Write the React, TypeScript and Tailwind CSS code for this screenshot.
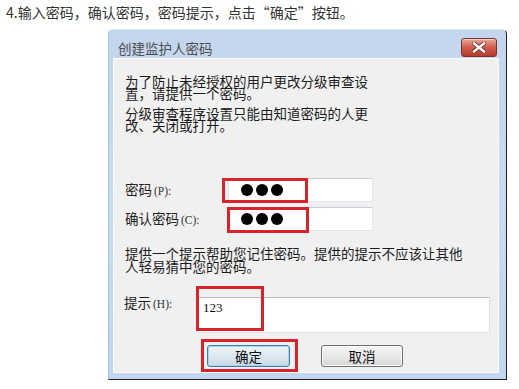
import React from "react";

const cjk = "font-['Noto_Sans_CJK_SC',sans-serif]";

function Dots() {
  return (
    <div className="flex gap-[3px] pl-[12px] items-center h-full">
      <span className="w-[12px] h-[12px] rounded-full bg-black" />
      <span className="w-[12px] h-[12px] rounded-full bg-black" />
      <span className="w-[12px] h-[12px] rounded-full bg-black" />
    </div>
  );
}

function Label({ zh, key2 }: { zh: string; key2: string }) {
  return (
    <div className="w-[103px] text-[13.5px] leading-[14px] text-[#222] whitespace-nowrap">
      {zh}
      <span className="font-['Liberation_Serif',serif] text-[11.5px] text-[#333] ml-[2px]">({key2}):</span>
    </div>
  );
}

export default function App() {
  return (
    <div className={`w-[519px] h-[389px] bg-white relative overflow-hidden ${cjk}`}>
      <p className="pl-[6px] h-[24px] leading-[24px] text-[14px] text-[#333]">
        4.输入密码，确认密码，密码提示，点击“确定”按钮。
      </p>

      {/* dialog */}
      <div className="ml-[108px] mt-[5px] w-[399px] h-[351px] flex flex-col bg-gradient-to-b from-[#c3d6ee] via-[#c9dbf1] to-[#c2d6ef] border-l border-t border-l-[#a9c0dc] border-t-[#dfe7f1] border-r border-b border-r-[#1e1e1e] border-b-[#1e1e1e] rounded-tl-[5px] rounded-tr-[5px]">
        <div className="h-[28px] flex items-start justify-between pl-[9px] pr-[9px]">
          <span className="pt-[10px] text-[13.5px] leading-[17px] text-[#4d4d4d]">创建监护人密码</span>
          <div className="mt-[8px] w-[36px] h-[19px] rounded-[3px] border border-[#7c3127] bg-gradient-to-b from-[#e8a79b] via-[#cf5b4c] to-[#b9392c] flex items-center justify-center shadow-[inset_0_1px_0_rgba(255,255,255,0.5)]">
            <svg width="14" height="11" viewBox="0 0 14 11">
              <path d="M2 1.5 L12 9.5 M12 1.5 L2 9.5" stroke="#6b2a22" strokeWidth="4" strokeLinecap="square" />
              <path d="M2 1.5 L12 9.5 M12 1.5 L2 9.5" stroke="#ffffff" strokeWidth="2.4" strokeLinecap="square" />
            </svg>
          </div>
        </div>

        <div className="ml-[4px] mr-[7px] h-[315px] bg-[#f0f0f0] border border-[#f9fbfd] text-[#1c1c1c]">
          <div className="pl-[11px] pt-[16px] text-[13.5px] leading-[12px]">
            <p>
              为了防止未经授权的用户更改分级审查设
              <br />
              置，请提供一个密码。
            </p>
            <p className="mt-[8px]">
              分级审查程序设置只能由知道密码的人更
              <br />
              改、关闭或打开。
            </p>
          </div>

          <div className="pl-[11px] mt-[47px] flex flex-col gap-[5px]">
            <div className="flex items-center h-[24px]">
              <Label zh="密码" key2="P" />
              <div className="w-[145px] h-[24px] bg-white border border-[#e2e7ee] border-t-[#c9ced6]">
                <Dots />
              </div>
            </div>
            <div className="flex items-center h-[24px]">
              <Label zh="确认密码" key2="C" />
              <div className="w-[145px] h-[24px] bg-white border border-[#e2e7ee] border-t-[#c9ced6]">
                <Dots />
              </div>
            </div>
          </div>

          <p className="pl-[11px] mt-[16px] text-[13.5px] leading-[12.5px]">
            提供一个提示帮助您记住密码。提供的提示不应该让其他
            <br />
            人轻易猜中您的密码。
          </p>

          <div className="pl-[10px] mt-[25px] flex items-start">
            <div className="w-[73px] -mt-[2px] text-[13.5px] leading-[14px] whitespace-nowrap">
              提示
              <span className="font-['Liberation_Serif',serif] text-[11.5px] text-[#333] ml-[2px]">(H):</span>
            </div>
            <div className="w-[293px] h-[36px] bg-white border border-[#dfe4eb] border-t-[#b9bfc8] pl-[5px] pt-[3px] font-['Liberation_Serif',serif] text-[13px] leading-[14px] text-[#111]">
              123
            </div>
          </div>

          <div className="pl-[93px] mt-[12px] flex gap-[31px]">
            <button className="w-[83px] h-[22px] rounded-[3px] border border-[#3d7fb6] bg-gradient-to-b from-[#eef5fa] via-[#dde8f1] to-[#c9d8e6] shadow-[inset_0_0_0_1px_#a8d4f2] text-[13.5px] leading-[18px] text-[#111]">
              确定
            </button>
            <button className="w-[82px] h-[22px] rounded-[3px] border border-[#707070] bg-gradient-to-b from-[#f4f4f4] via-[#e9e9e9] to-[#d6d6d6] shadow-[inset_0_0_0_1px_#fbfbfb] text-[13.5px] leading-[18px] text-[#111]">
              取消
            </button>
          </div>
        </div>
      </div>

      {/* red annotation boxes */}
      <div className="absolute left-[222px] top-[178px] w-[86px] h-[25px] border-[3px] border-[#d8232a]" />
      <div className="absolute left-[227px] top-[207px] w-[82px] h-[26px] border-[3px] border-[#d8232a]" />
      <div className="absolute left-[196px] top-[286px] w-[68px] h-[45px] border-[3px] border-[#d8232a]" />
      <div className="absolute left-[201px] top-[339px] w-[97px] h-[33px] border-[3px] border-[#d8232a]" />
    </div>
  );
}
